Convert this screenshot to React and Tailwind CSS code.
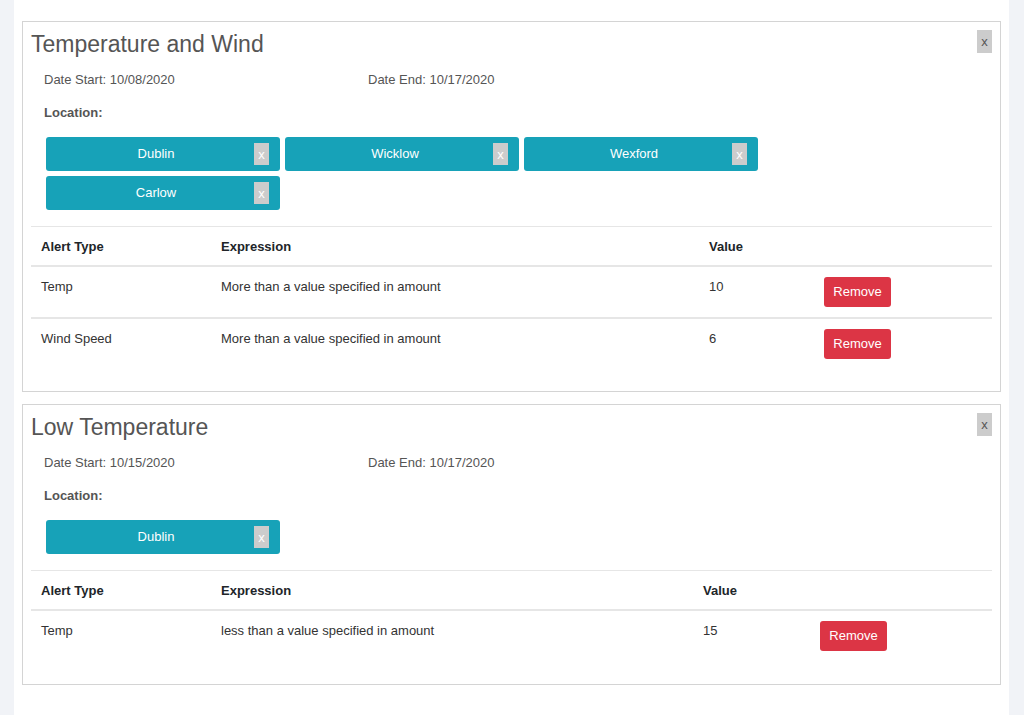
import React from "react";

const font = { fontFamily: '"Liberation Sans", Tahoma, sans-serif' };

function Chip({ name }) {
  return (
    <div className="relative flex h-[34px] w-[234px] items-center justify-center rounded-[3px] bg-[#17a2b8] pr-[14px] text-[13px] text-white">
      <span>{name}</span>
      <span className="absolute right-[11px] top-[6px] flex h-[22px] w-[15px] items-center justify-center bg-[#cccccc] pt-[2px] text-[13px] text-white">
        x
      </span>
    </div>
  );
}

function AlertCard({ title, start, end, locations, rows, cols, tail }) {
  return (
    <div className="relative border border-[#d4d4d4] bg-white px-[8px] pt-[8px]">
      <button className="absolute right-[8px] top-[8px] flex h-[23px] w-[15px] items-center justify-center bg-[#cccccc] text-[13px] text-[#555]">
        x
      </button>
      <h2 className="h-[29px] text-[23px] leading-[28px] text-[#555]">{title}</h2>
      <div className="mt-[11px] flex h-[20px] items-center pl-[13px] text-[13px] text-[#555]">
        <span className="w-[324px]">Date Start: {start}</span>
        <span>Date End: {end}</span>
      </div>
      <div className="mt-[13px] flex h-[20px] items-center pl-[13px] text-[13px] font-bold text-[#555]">
        Location:
      </div>
      <div className="mt-[14px] flex flex-wrap gap-x-[5px] gap-y-[5px] pl-[15px]">
        {locations.map((l) => (
          <Chip key={l} name={l} />
        ))}
      </div>
      <div className="mt-[16px] border-t border-[#e6e6e6] text-[13px]">
        <div className="flex h-[40px] items-center border-b-2 border-[#e6e6e6] pt-[2px] font-bold text-[#212529]">
          <div className="pl-[10px]" style={{ width: cols[0] }}>Alert Type</div>
          <div className="pl-[10px]" style={{ width: cols[1] }}>Expression</div>
          <div className="pl-[10px]" style={{ width: cols[2] }}>Value</div>
        </div>
        {rows.map((r, i) => (
          <div
            key={i}
            className={`flex h-[52px] items-start text-[#333] ${i < rows.length - 1 ? "border-b-2 border-[#e6e6e6]" : ""}`}
          >
            <div className="pl-[10px] pt-[10px] leading-[20px]" style={{ width: cols[0] }}>{r[0]}</div>
            <div className="pl-[10px] pt-[10px] leading-[20px]" style={{ width: cols[1] }}>{r[1]}</div>
            <div className="pl-[10px] pt-[10px] leading-[20px]" style={{ width: cols[2] }}>{r[2]}</div>
            <div className="pl-[10px] pt-[10px]">
              <button className="flex h-[30px] w-[67px] items-center justify-center rounded-[3px] bg-[#dc3545] text-[13px] text-white">
                Remove
              </button>
            </div>
          </div>
        ))}
        <div style={{ height: tail }} />
      </div>
    </div>
  );
}

export default function App() {
  return (
    <div className="flex min-h-[715px] w-full bg-[#f1f3f7]" style={font}>
      <div className="w-[14px] shrink-0" />
      <div className="flex w-[995px] flex-col gap-[12px] bg-white px-[8px] pt-[21px] pb-[30px]">
        <AlertCard
          title="Temperature and Wind"
          start="10/08/2020"
          end="10/17/2020"
          locations={["Dublin", "Wicklow", "Wexford", "Carlow"]}
          cols={[180, 488, 115]}
          tail={20}
          rows={[
            ["Temp", "More than a value specified in amount", "10"],
            ["Wind Speed", "More than a value specified in amount", "6"],
          ]}
        />
        <AlertCard
          title="Low Temperature"
          start="10/15/2020"
          end="10/17/2020"
          locations={["Dublin"]}
          cols={[180, 482, 117]}
          tail={21}
          rows={[["Temp", "less than a value specified in amount", "15"]]}
        />
      </div>
    </div>
  );
}
